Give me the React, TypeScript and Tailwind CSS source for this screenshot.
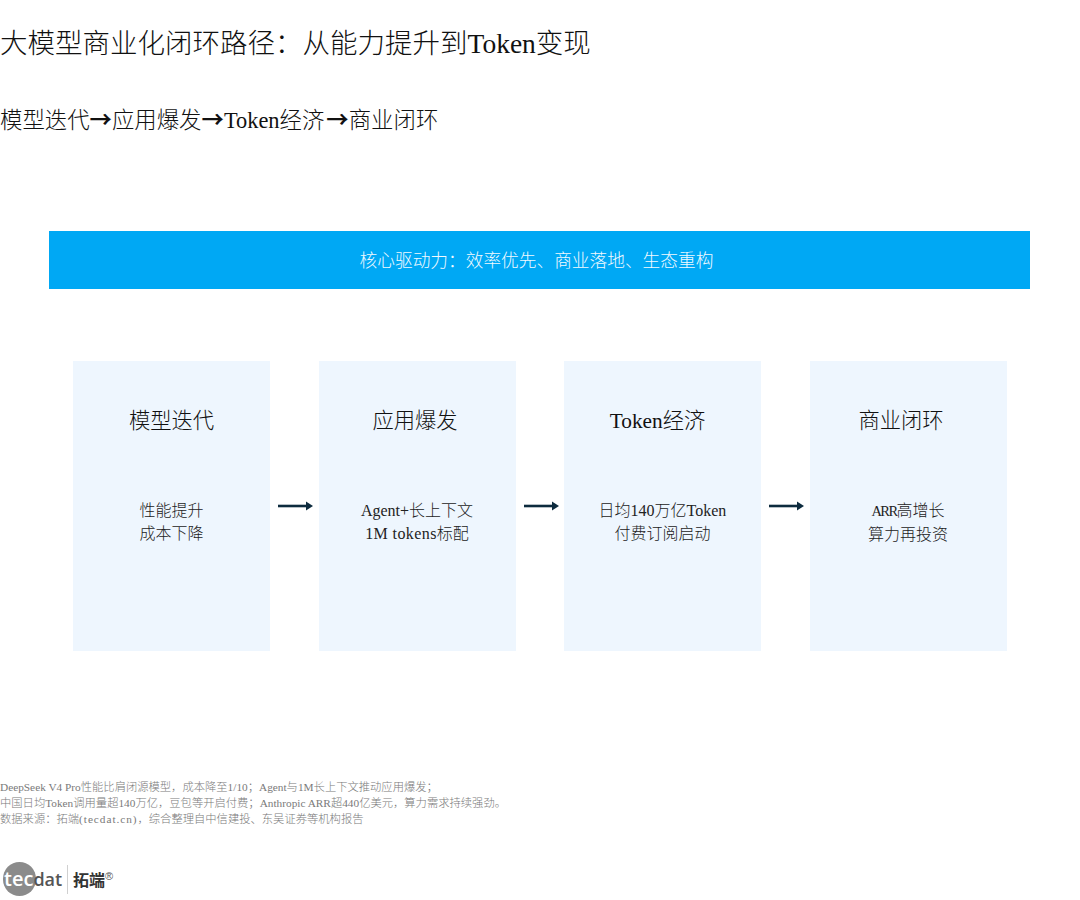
import React from 'react';

const Arrow = () => (
  <svg width="35" height="12" viewBox="0 0 35 12" className="shrink-0">
    <path d="M0 6H29" stroke="#0d2b3e" strokeWidth="2.6" />
    <path d="M28 1.5L35 6L28 10.5Z" fill="#0d2b3e" />
  </svg>
);

const Sep = ({ className = '' }: { className?: string }) => (
  <span className={`font-['Noto_Sans_CJK_SC',sans-serif] font-bold leading-none ${className}`}>→</span>
);

const cards = [
  { title: '模型迭代', titleClass: 'pr-0', lines: [<>性能提升</>, <>成本下降</>] },
  { title: '应用爆发', titleClass: 'pr-[4px]', lines: [<>Agent+长上下文</>, <><span className="tracking-[0.4px]">1M tokens</span>标配</>] },
  { title: 'Token经济', titleClass: 'pr-[10px]', lines: [<>日均140万亿Token</>, <>付费订阅启动</>] },
  { title: '商业闭环', titleClass: 'pr-[14px]', lines: [<><span className="text-[14.5px] tracking-[-1.6px]">ARR</span>高增长</>, <>算力再投资</>] },
];

export default function App() {
  return (
    <div className="font-['Liberation_Serif','Noto_Sans_CJK_SC',serif] font-light w-[1080px] h-[900px] bg-white flex flex-col overflow-hidden">
      <h1 className="mt-[24px] h-10 text-[27.5px] leading-10 text-[#111]">大模型商业化闭环路径：从能力提升到Token变现</h1>
      <h2 className="mt-[41px] h-8 text-[22.4px] leading-8 text-[#111]">模型迭代<Sep />应用爆发<Sep />Token经济<Sep className="ml-[2px]" />商业闭环</h2>

      <div className="mt-[94px] ml-[49px] w-[981px]">
        <div className="h-[58px] pr-[6px] pt-[2px] bg-[#00a8f4] flex items-center justify-center text-[17.7px] text-[#f0f9ff]">
          核心驱动力：效率优先、商业落地、生态重构
        </div>
        <div className="mt-[72px] ml-6 flex items-center">
          {cards.map((card, i) => (
            <React.Fragment key={i}>
              {i > 0 && (
                <div className="ml-[8px] mr-[5.5px] flex">
                  <Arrow />
                </div>
              )}
              <div className="w-[197px] h-[290px] bg-[#eef6fe] flex flex-col items-center text-[#111]">
                <div className={`mt-[44px] text-[21.3px] leading-8 ${card.titleClass}`}>{card.title}</div>
                <div className="mt-[62px] text-[16px] leading-[23px] text-center text-[#222]">
                  {card.lines.map((line, j) => (
                    <div key={j}>{line}</div>
                  ))}
                </div>
              </div>
            </React.Fragment>
          ))}
        </div>
      </div>

      <div className="mt-[128px] text-[11.3px] leading-4 text-[#7a7a7a]">
        <div>DeepSeek V4 Pro性能比肩闭源模型，成本降至1/10；Agent与1M长上下文推动应用爆发；</div>
        <div>中国日均Token调用量超140万亿，豆包等开启付费；Anthropic ARR超440亿美元，算力需求持续强劲。</div>
        <div>数据来源：拓端<span className="tracking-[0.95px]">(tecdat.cn)</span>，综合整理自中信建投、东吴证券等机构报告</div>
      </div>

      <div className="mt-[35px] ml-[3px] h-[34px] flex items-center">
        <div className="relative w-[60px] h-[34px] flex items-center">
          <div className="absolute left-0 top-0 w-[33px] h-[34px] rounded-full bg-[#8b8b8b]" />
          <span className="relative font-['Open_Sans',sans-serif] font-semibold text-[20px] leading-none ml-[1px]">
            <span className="text-white">tec</span><span className="text-[#555] text-[18px]">dat</span>
          </span>
        </div>
        <div className="ml-[4px] w-px h-[29px] bg-[#d0d0d0]" />
        <span className="ml-[5px] font-['Noto_Sans_CJK_SC',sans-serif] font-bold text-[16px] leading-none text-[#333]">拓端</span>
        <span className="font-['Liberation_Sans',sans-serif] text-[11px] leading-none text-[#555] -mt-[6px]">®</span>
      </div>
    </div>
  );
}
